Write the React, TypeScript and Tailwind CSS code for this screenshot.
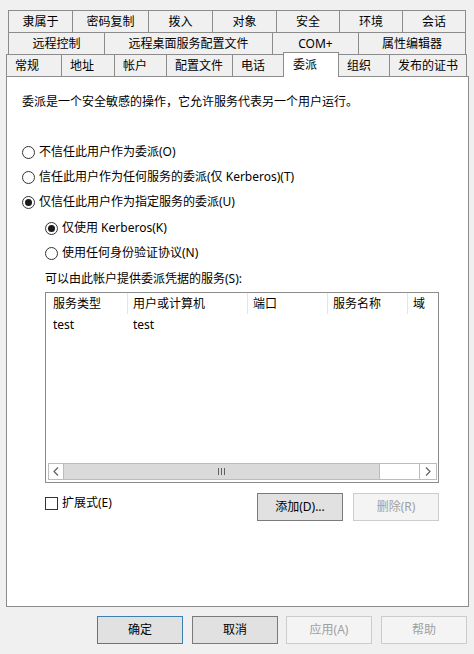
import React from "react";

type Tab = { label: string; w: string; active?: boolean };

const row1: Tab[] = [
  { label: "隶属于", w: "w-[65px]" },
  { label: "密码复制", w: "w-[77px]" },
  { label: "拨入", w: "w-[65px]" },
  { label: "对象", w: "w-[65px]" },
  { label: "安全", w: "w-[64px]" },
  { label: "环境", w: "w-[64px]" },
  { label: "会话", w: "w-[64px]" },
];

const row2: Tab[] = [
  { label: "远程控制", w: "w-[97px]" },
  { label: "远程桌面服务配置文件", w: "w-[169px]" },
  { label: "COM+", w: "w-[87px]" },
  { label: "属性编辑器", w: "w-[108px]" },
];

const row3: Tab[] = [
  { label: "常规", w: "w-[56px]" },
  { label: "地址", w: "w-[54px]" },
  { label: "帐户", w: "w-[53px]" },
  { label: "配置文件", w: "w-[67px]" },
  { label: "电话", w: "w-[52px]" },
  { label: "委派", w: "w-[56px]", active: true },
  { label: "组织", w: "w-[52px]" },
  { label: "发布的证书", w: "w-[78px]" },
];

const Radio = ({ checked, label }: { checked?: boolean; label: string }) => (
  <div className="flex h-[25px] items-start">
    <div className="flex h-[16px] items-center gap-[4px]">
      <span className="flex h-[13px] w-[13px] items-center justify-center rounded-full border border-[#333333] bg-white">
        {checked && <span className="h-[7px] w-[7px] rounded-full bg-[#1a1a1a]" />}
      </span>
      <span>{label}</span>
    </div>
  </div>
);

const Button = ({
  label,
  kind = "normal",
}: {
  label: string;
  kind?: "normal" | "default" | "dark" | "disabled";
}) => {
  const styles = {
    normal: "border-[#adadad] bg-[#e1e1e1] text-black",
    default: "border-[#3c7fb1] bg-[#e1e1e1] text-black",
    dark: "border-[#7a7a7a] bg-[#e1e1e1] text-black",
    disabled: "border-[#cccccc] bg-[#f4f4f4] text-[#a0a0a0]",
  }[kind];
  return (
    <div className={`flex h-[28px] w-[86px] items-center justify-center border ${styles}`}>
      {label}
    </div>
  );
};

const Chevron = ({ dir }: { dir: "left" | "right" }) => (
  <svg width="6" height="9" viewBox="0 0 6 9">
    <path
      d={dir === "left" ? "M5 0.5 L1 4.5 L5 8.5" : "M1 0.5 L5 4.5 L1 8.5"}
      fill="none"
      stroke="#606060"
      strokeWidth="1.2"
    />
  </svg>
);

export default function App() {
  return (
    <div className="h-[654px] w-[474px] overflow-hidden bg-[#f0f0f0] pt-[10px] font-['Noto_Sans','Noto_Sans_CJK_SC',sans-serif] text-[12px] text-black">
      {/* tab rows */}
      <div className="flex h-[23px] pl-[8px]">
        {row1.map((t, i) => (
          <div
            key={t.label}
            className={`flex h-[23px] items-center justify-center border border-[#8c8c8c] ${t.w} ${i ? "-ml-px" : ""}`}
          >
            {t.label}
          </div>
        ))}
      </div>
      <div className="-mt-px flex h-[23px] pl-[8px]">
        {row2.map((t, i) => (
          <div
            key={t.label}
            className={`flex h-[23px] items-center justify-center border border-[#8c8c8c] ${t.w} ${i ? "-ml-px" : ""}`}
          >
            {t.label}
          </div>
        ))}
      </div>
      <div className="-mt-[3px] flex h-[25px] items-end pl-[6px]">
        {row3.map((t, i) =>
          t.active ? (
            <div
              key={t.label}
              className={`relative z-10 -ml-px flex h-[25px] items-center border border-b-0 border-[#8c8c8c] bg-white pl-[9px] ${t.w}`}
            >
              {t.label}
            </div>
          ) : (
            <div
              key={t.label}
              className={`flex h-[23px] items-center border border-[#8c8c8c] pl-[8px] ${t.w} ${i ? "-ml-px" : ""}`}
            >
              {t.label}
            </div>
          )
        )}
      </div>

      {/* panel */}
      <div className="-mt-px ml-[6px] flex h-[531px] w-[463px] flex-col border border-[#8c8c8c] bg-white pl-[15px]">
        <div className="mt-[17px] h-[16px] leading-[16px]">
          委派是一个安全敏感的操作，它允许服务代表另一个用户运行。
        </div>

        <div className="mt-[34px]">
          <Radio label="不信任此用户作为委派(O)" />
          <Radio label="信任此用户作为任何服务的委派(仅 Kerberos)(T)" />
          <Radio checked label="仅信任此用户作为指定服务的委派(U)" />
        </div>

        <div className="ml-[23px] mt-px flex flex-col">
          <Radio checked label="仅使用 Kerberos(K)" />
          <Radio label="使用任何身份验证协议(N)" />
          <div className="mt-px h-[16px] leading-[16px]">可以由此帐户提供委派凭据的服务(S):</div>

          {/* list view */}
          <div className="mt-[5px] flex h-[191px] w-[394px] flex-col border border-[#8c8c8c] bg-white">
            <div className="flex h-[21px] overflow-hidden">
              <div className="flex w-[82px] shrink-0 items-center border-r border-[#e5e5e5] pl-[7px]">服务类型</div>
              <div className="flex w-[120px] shrink-0 items-center border-r border-[#e5e5e5] pl-[5px]">用户或计算机</div>
              <div className="flex w-[80px] shrink-0 items-center border-r border-[#e5e5e5] pl-[5px]">端口</div>
              <div className="flex w-[80px] shrink-0 items-center border-r border-[#e5e5e5] pl-[5px]">服务名称</div>
              <div className="flex w-[60px] shrink-0 items-center pl-[5px]">域</div>
            </div>
            <div className="flex h-[22px] items-center">
              <div className="w-[82px] pl-[7px]">test</div>
              <div className="w-[120px] pl-[5px]">test</div>
            </div>
            <div className="flex-1" />
            <div className="mb-[2px] ml-[2px] mr-px flex h-[17px] border border-[#bcbcbc] bg-white">
              <div className="flex w-[15px] items-center justify-center border-r border-[#bcbcbc]">
                <Chevron dir="left" />
              </div>
              <div className="flex w-[316px] items-center justify-center border-r border-[#bcbcbc] bg-[#dadada]">
                <svg width="7" height="7" viewBox="0 0 7 7">
                  <rect x="0" y="0" width="1" height="7" fill="#606060" />
                  <rect x="3" y="0" width="1" height="7" fill="#606060" />
                  <rect x="6" y="0" width="1" height="7" fill="#606060" />
                </svg>
              </div>
              <div className="flex-1" />
              <div className="flex w-[17px] items-center justify-center border-l border-[#bcbcbc]">
                <Chevron dir="right" />
              </div>
            </div>
          </div>

          <div className="mt-[10px] flex w-[394px] items-start justify-between">
            <div className="mt-[2px] flex h-[16px] items-center gap-[4px]">
              <span className="h-[13px] w-[13px] border border-[#333333] bg-white" />
              <span>扩展式(E)</span>
            </div>
            <div className="flex gap-[10px]">
              <Button label="添加(D)..." kind="dark" />
              <Button label="删除(R)" kind="disabled" />
            </div>
          </div>
        </div>
      </div>

      {/* dialog buttons */}
      <div className="mt-[9px] flex pl-[97px]">
        <Button label="确定" kind="default" />
        <div className="ml-[9px]">
          <Button label="取消" kind="dark" />
        </div>
        <div className="ml-[8px]">
          <Button label="应用(A)" kind="disabled" />
        </div>
        <div className="ml-[9px]">
          <Button label="帮助" kind="disabled" />
        </div>
      </div>
    </div>
  );
}
